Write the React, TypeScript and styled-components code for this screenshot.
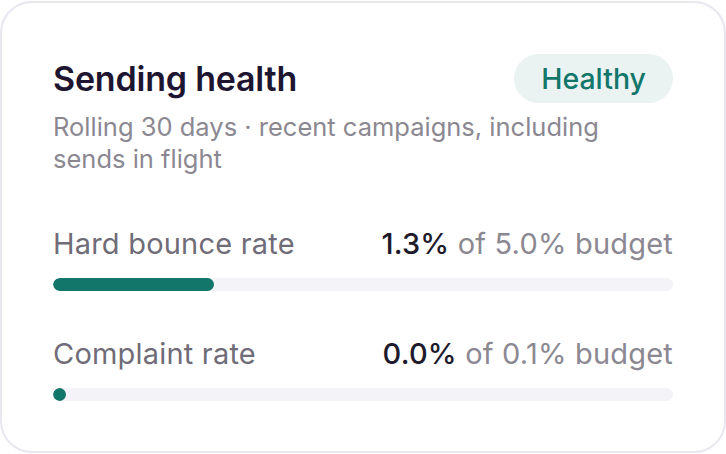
import React from 'react';
import styled, { createGlobalStyle } from 'styled-components';

const GlobalStyle = createGlobalStyle`
  html, body {
    margin: 0;
    padding: 0;
    background: #ffffff;
  }
  body {
    font-family: Inter, "Noto Sans", sans-serif;
    -webkit-font-smoothing: antialiased;
  }
`;

const Page = styled.div`
  padding-top: 1px;
`;

const Card = styled.section`
  box-sizing: border-box;
  width: 726px;
  height: 452px;
  border: 2px solid #e8e6ee;
  border-radius: 32px;
  background: #ffffff;
  padding: 51px 51px 48px;
  display: flex;
  flex-direction: column;
`;

const Header = styled.div`
  display: flex;
  align-items: center;
  justify-content: space-between;
`;

const Title = styled.h2`
  margin: 0;
  font-size: 34px;
  line-height: 40px;
  font-weight: 600;
  color: #1e1530;
  letter-spacing: -0.2px;
`;

const Badge = styled.span`
  display: inline-flex;
  align-items: center;
  height: 49px;
  padding: 0 27px;
  border-radius: 999px;
  background: #eaf3f2;
  color: #12766b;
  font-size: 28.5px;
  font-weight: 500;
`;

const Subtitle = styled.p`
  margin: 8px 0 0;
  max-width: 590px;
  font-size: 25.5px;
  line-height: 32px;
  color: #8b8892;
`;

const Metrics = styled.div`
  display: flex;
  flex-direction: column;
  gap: 46px;
  margin-top: 52px;
`;

const Metric = styled.div`
  display: flex;
  flex-direction: column;
  gap: 17px;
`;

const MetricHead = styled.div`
  display: flex;
  align-items: baseline;
  justify-content: space-between;
  font-size: 29px;
  line-height: 34px;
  letter-spacing: 0.2px;
`;

const Label = styled.span`
  color: #6f6c77;
`;

const Value = styled.span`
  color: #8b8892;
`;

const Strong = styled.strong`
  font-weight: 500;
  color: #1e1a2b;
`;

const Track = styled.div`
  height: 13px;
  border-radius: 999px;
  background: #f4f3f7;
  overflow: hidden;
`;

const Fill = styled.div`
  height: 100%;
  min-width: 13px;
  border-radius: 999px;
  background: #12766b;
`;

type Row = { label: string; value: number; budget: number };

const rows: Row[] = [
  { label: 'Hard bounce rate', value: 1.3, budget: 5.0 },
  { label: 'Complaint rate', value: 0.0, budget: 0.1 },
];

const App = () => {
  return (
    <Page>
      <GlobalStyle />
      <Card>
        <Header>
          <Title>Sending health</Title>
          <Badge>Healthy</Badge>
        </Header>
        <Subtitle>
          Rolling 30 days · recent campaigns, including sends in flight
        </Subtitle>
        <Metrics>
          {rows.map((r) => (
            <Metric key={r.label}>
              <MetricHead>
                <Label>{r.label}</Label>
                <Value>
                  <Strong>{r.value.toFixed(1)}%</Strong> of {r.budget.toFixed(1)}% budget
                </Value>
              </MetricHead>
              <Track>
                <Fill style={{ width: `${(r.value / r.budget) * 100}%` }} />
              </Track>
            </Metric>
          ))}
        </Metrics>
      </Card>
    </Page>
  );
};

export default App;
